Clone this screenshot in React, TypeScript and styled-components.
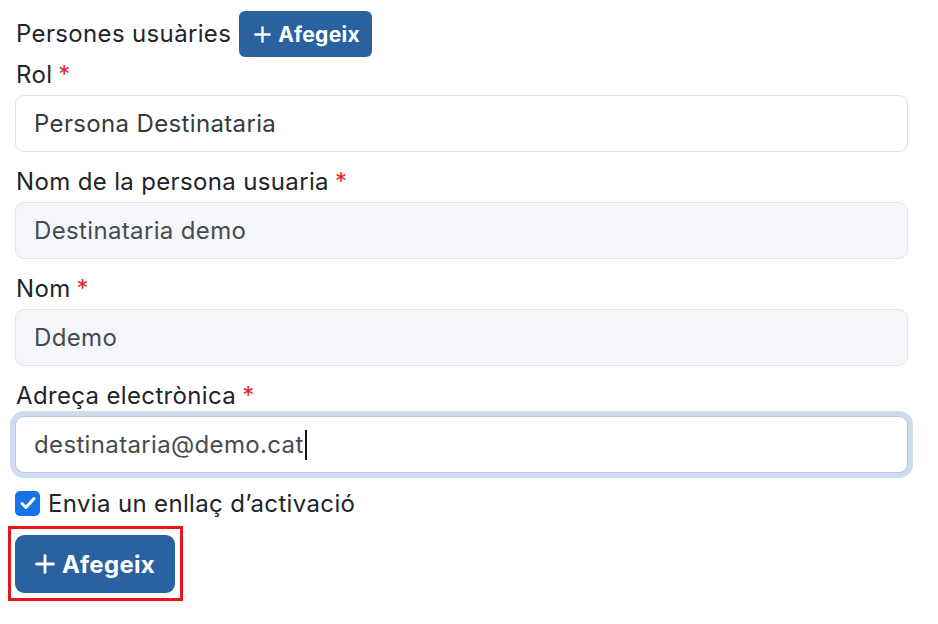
import React from "react";
import styled, { createGlobalStyle } from "styled-components";

const GlobalStyle = createGlobalStyle`
  html, body {
    margin: 0;
    padding: 0;
    background: #ffffff;
  }
  body {
    font-family: Inter, "Noto Sans", "Liberation Sans", sans-serif;
    color: #212529;
  }
  * { box-sizing: border-box; }
`;

const Page = styled.div`
  width: 938px;
  padding: 11px 30px 0 15px;
  letter-spacing: 0.35px;
`;

const Header = styled.div`
  display: flex;
  align-items: center;
  gap: 8px;
  height: 46px;
`;

const Title = styled.span`
  font-size: 24px;
  line-height: 36px;
  color: #212529;
  padding-left: 1px;
`;

const Button = styled.button<{ $size?: "sm" | "md" }>`
  display: inline-flex;
  align-items: center;
  gap: 7px;
  border: none;
  background: #29629e;
  color: #ffffff;
  font-family: Inter, "Noto Sans", "Liberation Sans", sans-serif;
  font-weight: 700;
  letter-spacing: 0.3px;
  cursor: pointer;
  height: ${(p) => (p.$size === "sm" ? "46px" : "58px")};
  padding: ${(p) => (p.$size === "sm" ? "0 12px 0 15px" : "0 20px 0 20px")};
  font-size: ${(p) => (p.$size === "sm" ? "21px" : "24px")};
  border-radius: ${(p) => (p.$size === "sm" ? "6px" : "9px")};
`;

const Highlight = styled.div`
  display: inline-block;
  margin: 5px 0 0 -7px;
  padding: 6px 5px 5px 4px;
  border: 3px solid #e8141c;
  line-height: 0;
`;

const Field = styled.div`
  margin-bottom: 12px;
`;

const Label = styled.div`
  font-size: 24px;
  line-height: 36px;
  margin-bottom: 2px;
  padding-left: 1px;
  color: #212529;
`;

const Required = styled.span`
  color: #e3262d;
  margin-left: 6px;
`;

const Control = styled.div<{ $variant?: "normal" | "disabled" | "focus" }>`
  display: flex;
  align-items: center;
  height: 57px;
  padding: 0 18px;
  font-size: 24px;
  border-radius: 9px;
  border: 1px solid
    ${(p) =>
      p.$variant === "focus"
        ? "#b4c9e4"
        : p.$variant === "disabled"
        ? "#e2e6ec"
        : "#dee2e6"};
  background: ${(p) => (p.$variant === "disabled" ? "#f4f6fa" : "#ffffff")};
  color: ${(p) => (p.$variant === "normal" ? "#363a3f" : "#464b51")};
  box-shadow: ${(p) =>
    p.$variant === "focus" ? "0 0 0 5px #cedcee" : "none"};
`;

const Caret = styled.span`
  display: inline-block;
  width: 0;
  height: 30px;
  border-left: 2px solid #111;
  margin-left: 1px;
`;

const CheckRow = styled.label`
  display: flex;
  align-items: center;
  gap: 8px;
  height: 36px;
  font-size: 24px;
  color: #212529;
`;

const CheckBox = styled.span`
  display: inline-flex;
  flex: none;
  align-items: center;
  justify-content: center;
  width: 25px;
  height: 25px;
  border-radius: 5px;
  background: #1473e6;
`;

const PlusIcon = ({ size }: { size: number }) => (
  <svg width={size} height={size} viewBox="0 0 20 20" fill="none">
    <path
      d="M10 1.6v16.8M1.6 10h16.8"
      stroke="currentColor"
      strokeWidth="2.8"
      strokeLinecap="round"
    />
  </svg>
);

const CheckIcon = () => (
  <svg width="20" height="20" viewBox="0 0 20 20" fill="none">
    <path
      d="M4 10.5l4 4 8-9"
      stroke="#ffffff"
      strokeWidth="3"
      strokeLinecap="round"
      strokeLinejoin="round"
    />
  </svg>
);

export default function App() {
  return (
    <>
      <GlobalStyle />
      <Page>
        <Header>
          <Title>Persones usuàries</Title>
          <Button $size="sm">
            <PlusIcon size={17} />
            Afegeix
          </Button>
        </Header>

        <Field>
          <Label>
            Rol<Required>*</Required>
          </Label>
          <Control $variant="normal">Persona Destinataria</Control>
        </Field>

        <Field>
          <Label>
            Nom de la persona usuaria<Required>*</Required>
          </Label>
          <Control $variant="disabled">Destinataria demo</Control>
        </Field>

        <Field>
          <Label>
            Nom<Required>*</Required>
          </Label>
          <Control $variant="disabled">Ddemo</Control>
        </Field>

        <Field>
          <Label>
            Adreça electrònica<Required>*</Required>
          </Label>
          <Control $variant="focus">
            destinataria@demo.cat
            <Caret />
          </Control>
        </Field>

        <CheckRow>
          <CheckBox>
            <CheckIcon />
          </CheckBox>
          Envia un enllaç d’activació
        </CheckRow>

        <Highlight>
          <Button $size="md">
            <PlusIcon size={20} />
            Afegeix
          </Button>
        </Highlight>
      </Page>
    </>
  );
}
